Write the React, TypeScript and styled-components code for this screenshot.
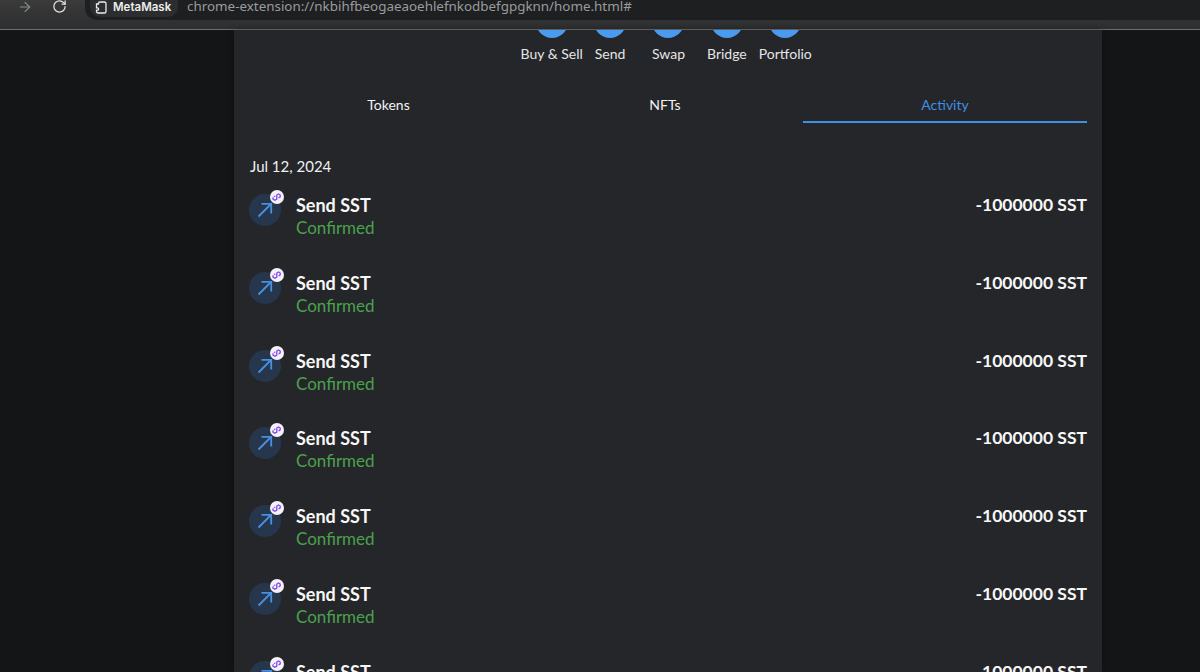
import styled, { createGlobalStyle } from 'styled-components';
import { ArrowRight, RotateCw } from 'lucide-react';

const GlobalStyle = createGlobalStyle`
    html, body {
        margin: 0;
        height: 100%;
        overflow: hidden;
        background: #141517;
    }
    * {
        box-sizing: border-box;
    }
`;

const Page = styled.div`
    display: flex;
    flex-direction: column;
    width: 1200px;
    height: 672px;
    overflow: hidden;
    font-family: Lato, "Noto Sans", sans-serif;
    color: #fff;
`;

const Toolbar = styled.div`
    display: flex;
    align-items: flex-start;
    flex: none;
    height: 30px;
    padding-left: 17px;
    background: linear-gradient(#3b3b3c 0, #333435 14px, #2e2f30 28px);
    border-bottom: 1px solid #6d6e70;
`;

const NavIcon = styled.div<{ $dim?: boolean }>`
    display: flex;
    flex: none;
    width: 16px;
    height: 16px;
    margin-top: -1px;
    margin-right: 19px;
    color: ${(p) => (p.$dim ? '#8a8b8d' : '#e2e2e3')};
`;

const UrlBar = styled.div`
    display: flex;
    align-items: flex-start;
    flex: 1;
    height: 23px;
    margin-top: -3px;
    margin-left: -2px;
    padding: 3px 0 0 5px;
    background: #1e1f21;
    border-radius: 0 0 0 12px;
`;

const Chip = styled.div`
    display: flex;
    align-items: center;
    gap: 5px;
    flex: none;
    width: 88px;
    height: 17px;
    padding: 0 0 3px 5px;
    border-radius: 0 0 10px 10px;
    background: #2c2d2f;
    font-family: Inter, sans-serif;
    font-size: 11.5px;
    font-weight: 600;
    color: #eceded;
`;

const Url = styled.div`
    margin-left: 9px;
    margin-top: -3px;
    font-family: "Noto Sans", sans-serif;
    font-size: 13.4px;
    line-height: 19px;
    color: #9a9b9e;
    white-space: nowrap;
`;

const Panel = styled.div`
    flex: 1;
    width: 868px;
    margin-left: 234px;
    overflow: hidden;
    background: #252629;
    box-shadow: 0 0 6px rgba(0, 0, 0, 0.35);
`;

const Actions = styled.div`
    display: flex;
    justify-content: center;
    padding-left: 1px;
`;

const Action = styled.div`
    display: flex;
    flex-direction: column;
    align-items: center;
    width: 58.4px;
    font-size: 14px;
    line-height: 20px;
    color: #e4e5e6;
    white-space: nowrap;
`;

const ActionCircle = styled.div`
    width: 32px;
    height: 32px;
    margin-top: -24px;
    margin-bottom: 6px;
    border-radius: 50%;
    background: #4a9bf0;
`;

const Tabs = styled.div`
    display: grid;
    grid-template-columns: 277px 276px 284px;
    margin: 20px 15px 0 16px;
`;

const Tab = styled.div<{ $active?: boolean }>`
    height: 39px;
    padding-top: 11px;
    text-align: center;
    font-size: 14px;
    line-height: 20px;
    color: ${(p) => (p.$active ? '#3f8fe4' : '#f2f3f4')};
    border-bottom: 2px solid ${(p) => (p.$active ? '#3f8fe4' : 'transparent')};
`;

const DateLabel = styled.div`
    margin: 33px 0 0 16px;
    font-size: 15px;
    line-height: 20px;
    color: #eff0f1;
`;

const TxList = styled.div`
    padding: 0 15px;
`;

const TxRow = styled.div`
    display: flex;
    align-items: flex-start;
    height: 77.75px;
    padding-top: 17px;
`;

const TxIcon = styled.div`
    position: relative;
    flex: none;
    display: flex;
    align-items: center;
    justify-content: center;
    width: 32px;
    height: 32px;
    margin-top: 1px;
    margin-right: 15px;
    border-radius: 50%;
    background: #26374d;
    color: #4a90e2;
`;

const NetworkBadge = styled.div`
    position: absolute;
    top: -4px;
    right: -3px;
    display: flex;
    align-items: center;
    justify-content: center;
    width: 14px;
    height: 14px;
    border-radius: 50%;
    background: #f4f1fb;
`;

const TxText = styled.div`
    flex: 1;
`;

const TxTitle = styled.div`
    font-size: 18px;
    font-weight: 700;
    line-height: 24px;
    color: #f6f7f7;
`;

const TxStatus = styled.div`
    font-size: 17px;
    line-height: 22px;
    color: #4aa14e;
`;

const TxAmount = styled.div`
    font-size: 17.5px;
    font-weight: 700;
    line-height: 24px;
    color: #f6f7f7;
`;

const actions = ['Buy & Sell', 'Send', 'Swap', 'Bridge', 'Portfolio'];
const rows = [0, 1, 2, 3, 4, 5, 6];

const ExtensionIcon = () => (
    <svg width="13" height="13" viewBox="0 0 13 13" fill="none" stroke="#eceded" strokeWidth="1.3">
        <path d="M3.5 3V2.4C3.5 1.5 4.2 1 5 1h4.2c.9 0 1.8.6 1.8 1.6V10.4c0 .9-.7 1.6-1.6 1.6H3c-.9 0-1.5-.6-1.5-1.4V9.2h1c.7 0 1.1-.5 1.1-1.2S3.2 6.8 2.5 6.8h-1V3z" />
    </svg>
);

const SendArrow = () => (
    <svg width="16" height="16" viewBox="0 0 16 16" fill="none" stroke="currentColor" strokeWidth="1.8">
        <path d="M1.5 14.5 14 2" />
        <path d="M4.5 1.8H14.2V11.5" />
    </svg>
);

const PolygonMark = () => (
    <svg width="10" height="10" viewBox="0 0 10 10" fill="none" stroke="#8247e5" strokeWidth="1.3">
        <path d="M1 5.2v1.9l1.9 1.1 1.9-1.1V3l1.7-1 1.7 1v1.9L6.6 6" />
        <path d="M3.4 4 1.9 4.5" />
    </svg>
);

const App = () => {
    return (
        <Page>
            <GlobalStyle />
            <Toolbar>
                <NavIcon $dim><ArrowRight size={16} strokeWidth={1.6} /></NavIcon>
                <NavIcon><RotateCw size={15} strokeWidth={2} /></NavIcon>
                <UrlBar>
                    <Chip><ExtensionIcon />MetaMask</Chip>
                    <Url>chrome-extension://nkbihfbeogaeaoehlefnkodbefgpgknn/home.html#</Url>
                </UrlBar>
            </Toolbar>
            <Panel>
                <Actions>
                    {actions.map((label) => (
                        <Action key={label}>
                            <ActionCircle />
                            {label}
                        </Action>
                    ))}
                </Actions>
                <Tabs>
                    <Tab>Tokens</Tab>
                    <Tab>NFTs</Tab>
                    <Tab $active>Activity</Tab>
                </Tabs>
                <DateLabel>Jul 12, 2024</DateLabel>
                <TxList>
                    {rows.map((i) => (
                        <TxRow key={i}>
                            <TxIcon>
                                <SendArrow />
                                <NetworkBadge><PolygonMark /></NetworkBadge>
                            </TxIcon>
                            <TxText>
                                <TxTitle>Send SST</TxTitle>
                                <TxStatus>Confirmed</TxStatus>
                            </TxText>
                            <TxAmount>-1000000 SST</TxAmount>
                        </TxRow>
                    ))}
                </TxList>
            </Panel>
        </Page>
    );
};

export default App;
